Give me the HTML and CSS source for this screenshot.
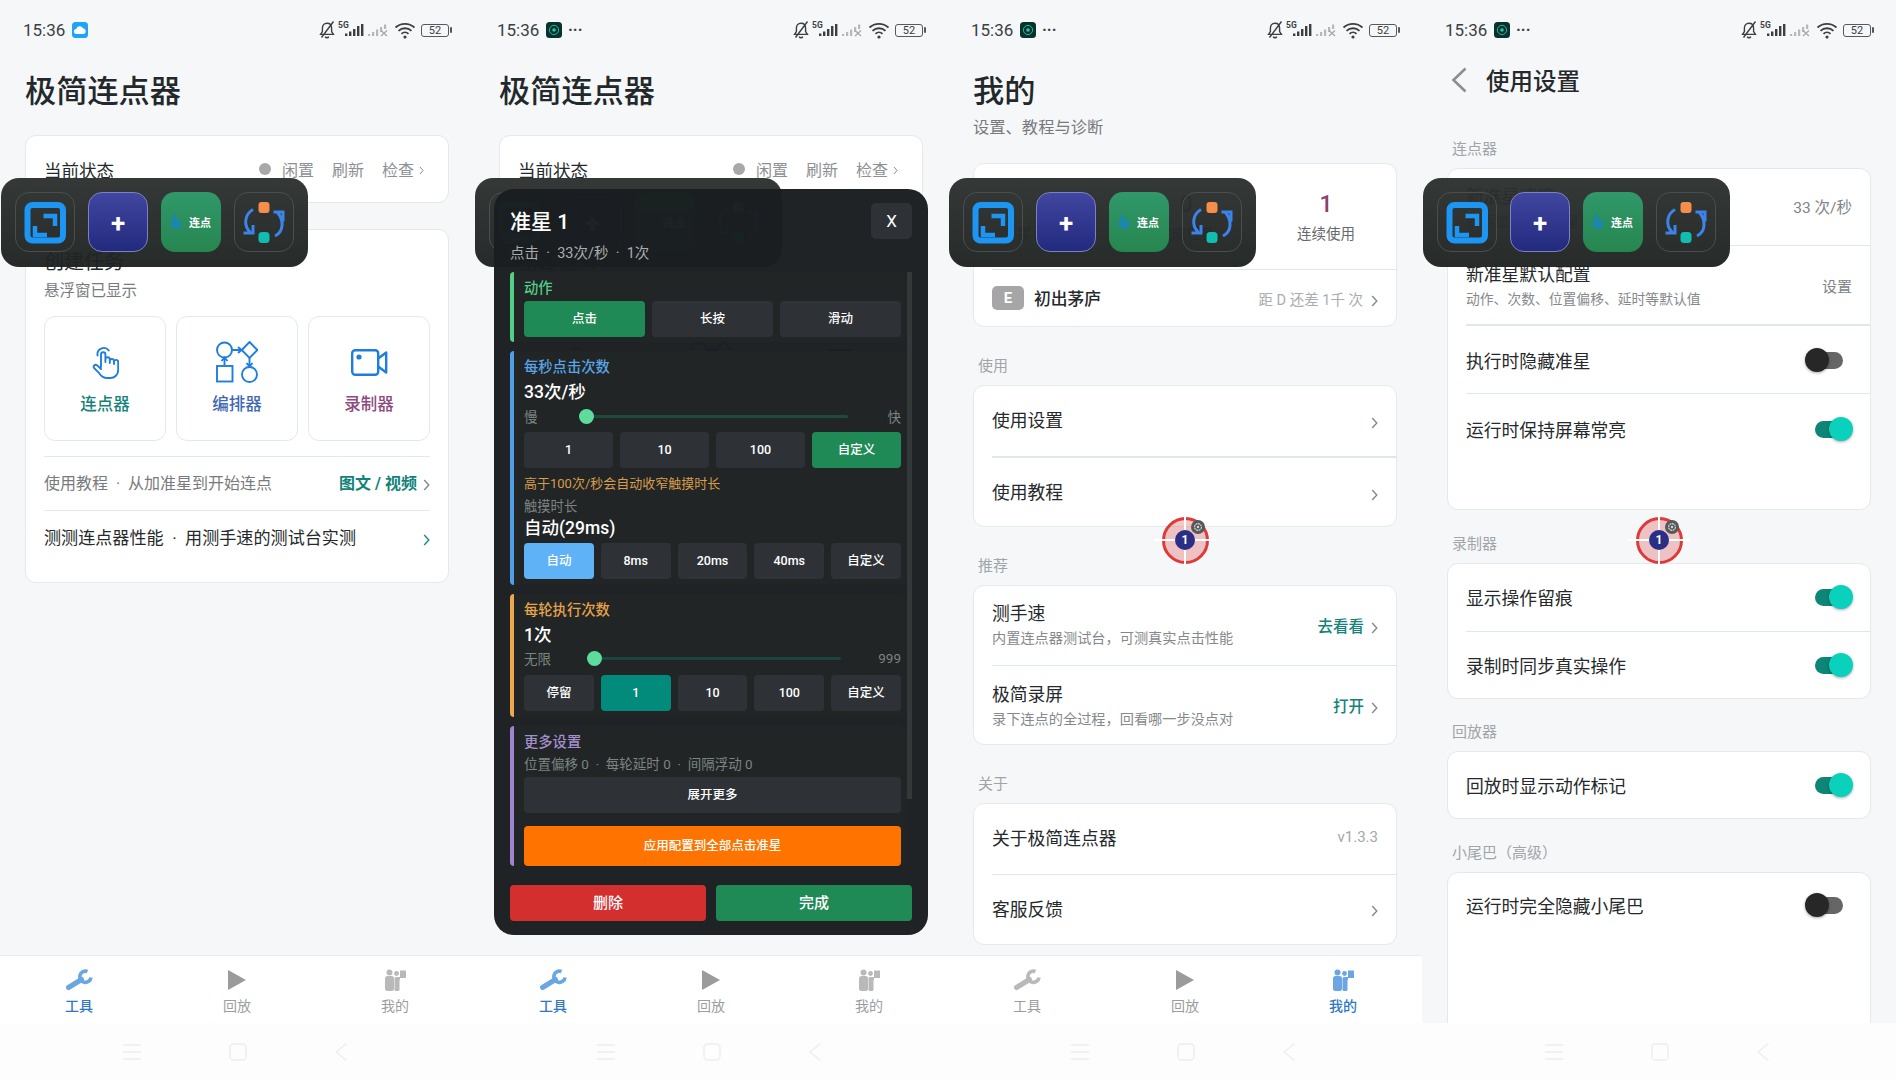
FILE: index.html
```html
<!DOCTYPE html>
<html lang="zh">
<head>
<meta charset="utf-8">
<title>极简连点器</title>
<link rel="stylesheet" href="styles.css">
</head>
<body>
<svg class="defs" width="0" height="0">
  <symbol id="i-chev" viewBox="0 0 7 12"><path d="M1.2 1l4.6 5-4.6 5" fill="none" stroke="currentColor" stroke-width="1.4"/></symbol>
  <symbol id="i-cloud" viewBox="0 0 16 16"><rect width="16" height="16" rx="3.5" fill="#1ea3f6"/><path d="M4.6 12a2.5 2.5 0 0 1-.4-5A3.6 3.6 0 0 1 11 6.3 2.9 2.9 0 0 1 11.6 12z" fill="#fff"/></symbol>
  <symbol id="i-app" viewBox="0 0 16 16"><rect width="16" height="16" rx="3.5" fill="#07332f"/><circle cx="8" cy="8" r="4.6" fill="none" stroke="#2cc3a8" stroke-width=".9"/><circle cx="8" cy="8" r="1.8" fill="#2cc3a8"/></symbol>
  <symbol id="i-status" viewBox="0 0 96 20">
    <path d="M8 3.2c-3 0-4.6 2.2-4.6 5v3.4L1.6 14.4h12.8l-1.8-2.8V8.2c0-2.8-1.6-5-4.6-5zM6.2 16.6a2 2 0 0 0 3.6 0M14.5 1.5L2.5 17.5" fill="none" stroke="#3b3f41" stroke-width="1.4"/>
    <path d="M26 13.5h2.4v2.5H26zM30 11.5h2.4V16H30zM34 9h2.4v7H34zM38 6h2.4v10H38zM42 4h2.4v12H42z" fill="#3b3f41"/>
    <path d="M49 14h2.2v2H49zM53 12h2.2v4H53zM57 9.5h2.2V16H57zM61 7h2.2v5H61zM65 4.5h2.2V9H65z" fill="#b5b9bb"/>
    <path d="M62 10.5l6 5.5M68 10.5l-6 5.5" stroke="#a5a9ab" stroke-width="1.3"/>
    <path d="M76.5 7.5a14 14 0 0 1 19 0M79.5 10.8a9.5 9.5 0 0 1 13 0M82.5 13.8a5 5 0 0 1 7 0" fill="none" stroke="#3b3f41" stroke-width="1.8"/>
    <circle cx="86" cy="17" r="1.6" fill="#3b3f41"/>
  </symbol>
  <symbol id="i-expand" viewBox="0 0 60 60"><rect x="12.5" y="13" width="35.5" height="35.5" rx="5" fill="none" stroke="#1d95f2" stroke-width="6"/><path d="M28.5 24H40v10M20 34v9h12" fill="none" stroke="#1d95f2" stroke-width="4.5"/></symbol>
  <symbol id="i-mini-hand" viewBox="0 0 14 16"><path d="M4.500 1.500a2 2 0 0 1 3.600 0l.4 4 2.500.4c1.800.4 2.500 1.800 2.500 3.800 0 3.400-2.200 5.300-5 5.300-3.200 0-6-2.200-7.800-6.500l2.600-.5L4.500 9z" fill="#1a87ad"/></symbol>
  <symbol id="i-sync" viewBox="0 0 60 60">
    <rect x="24.5" y="10" width="11" height="11" rx="3" fill="#f58d4b"/>
    <rect x="24.5" y="40" width="11" height="11" rx="3.5" fill="#10bdae"/>
    <path d="M19 17.5C11 22 9 33 16 40M9.5 41H19v-8M41 44c8-4 10-15 2-24M39.5 20H49v9.500" fill="none" stroke="#3c84ea" stroke-width="3"/>
  </symbol>
  <symbol id="i-hand" viewBox="0 0 28 33"><g fill="none" stroke="currentColor" stroke-width="1.9" stroke-linecap="round" stroke-linejoin="round"><path d="M10 21V8.500a2.200 2.200 0 0 1 4.400 0V16M14.400 13.500a2.200 2.200 0 0 1 4.400 0V17M18.800 14.500a2.200 2.200 0 0 1 4.200 0V18M23 16a2.100 2.100 0 0 1 4.200 0v8c0 4.600-3.400 8-8 8h-3c-4 0-6-1.800-8-4.800l-5-5c-1.600-2 .8-4.400 3-2.800L10 23"/><path d="M6.600 9.500a6.300 6.300 0 0 1 11.200-5"/></g></symbol>
  <symbol id="i-flow" viewBox="0 0 42 42"><g fill="none" stroke="currentColor" stroke-width="1.900"><circle cx="8.500" cy="9" r="7.500"/><path d="M33.500 1l7.800 8-7.800 8-7.800-8z"/><rect x="1" y="25" width="15.500" height="15.500"/><circle cx="33.500" cy="33.500" r="7.500"/><path d="M16 9h9.500M22 6l3.500 3-3.500 3M33.500 17v8.500M30.500 22l3 3.500 3-3.500M8.500 25v-8.500M5.500 20l3-3.500 3 3.500"/></g></symbol>
  <symbol id="i-cam" viewBox="0 0 37 27"><g fill="none" stroke="currentColor" stroke-width="2.400" stroke-linejoin="round"><rect x="1.200" y="1.200" width="26" height="24.500" rx="3"/><path d="M27.200 9.500l8-6v20l-8-6"/></g><circle cx="8" cy="8" r="2.600" fill="currentColor"/></symbol>
  <symbol id="i-wrench" viewBox="0 0 28 22"><path d="M3.500 18.500l13-8" fill="none" stroke="currentColor" stroke-width="5" stroke-linecap="round"/><path d="M22.500 2.500a5.600 5.600 0 1 0 3.500 6" fill="none" stroke="currentColor" stroke-width="3.600"/></symbol>
  <symbol id="i-play" viewBox="0 0 18 20"><path d="M0 0l18 10L0 20z" fill="currentColor"/></symbol>
  <symbol id="i-user" viewBox="0 0 22 22"><g fill="currentColor"><circle cx="5.500" cy="3.500" r="3"/><rect x="1" y="7" width="9" height="15" rx="2.500"/><circle cx="12.500" cy="4.500" r="2.400"/><rect x="10.500" y="8" width="5" height="14" rx="1.500"/><path d="M14 8h2V1.500h6V9h-6v2h-2z"/></g></symbol>
  <symbol id="i-nav-menu" viewBox="0 0 18 16"><path d="M0 1h18M0 8h18M0 15h18" stroke="currentColor" stroke-width="1.300"/></symbol>
  <symbol id="i-nav-home" viewBox="0 0 18 18"><rect x="1" y="1" width="16" height="16" rx="3.500" fill="none" stroke="currentColor" stroke-width="1.300"/></symbol>
  <symbol id="i-nav-back" viewBox="0 0 12 18"><path d="M11.500 .5L1 9l10.500 8.500" fill="none" stroke="currentColor" stroke-width="1.300"/></symbol>
  <symbol id="i-gear" viewBox="0 0 14 14"><circle cx="7" cy="7" r="7" fill="#55595a"/><circle cx="7" cy="7" r="3.400" fill="none" stroke="#d8d8d8" stroke-width="1.100" stroke-dasharray="2 .6"/><circle cx="7" cy="7" r="1.200" fill="#d8d8d8"/></symbol>
</svg>

<div class="phones">

  <!-- tools page -->
  <section class="phone">
    <div class="status">
      <span class="time">15:36</span>
      <svg class="app-icon"><use href="#i-cloud"/></svg>
      <span class="status-right">
        <svg class="status-icons"><use href="#i-status"/></svg>
        <span class="five-g">5G</span>
        <span class="battery">52</span>
      </span>
    </div>
    <main class="content">
      <h1 class="title">极简连点器</h1>
      <div class="card state-card">
        <span class="state-name">当前状态</span>
        <span class="state-dot"></span>
        <span class="state-link">闲置</span>
        <span class="state-link">刷新</span>
        <span class="state-link">检查</span>
        <svg class="chev chev-small"><use href="#i-chev"/></svg>
      </div>
      <div class="card task-card">
        <div class="task-title">创建任务</div>
        <div class="task-sub">悬浮窗已显示</div>
        <div class="tiles">
          <div class="tile"><svg class="tile-icon hand"><use href="#i-hand"/></svg><span class="tile-name teal">连点器</span></div>
          <div class="tile"><svg class="tile-icon flow"><use href="#i-flow"/></svg><span class="tile-name indigo">编排器</span></div>
          <div class="tile"><svg class="tile-icon cam"><use href="#i-cam"/></svg><span class="tile-name plum">录制器</span></div>
        </div>
        <div class="task-row tutorial">
          <span class="task-note">使用教程 &nbsp;·&nbsp; 从加准星到开始连点</span>
          <span class="link-bold">图文 / 视频</span>
          <svg class="chev"><use href="#i-chev"/></svg>
        </div>
        <div class="task-row perf">
          <span class="task-test">测测连点器性能 &nbsp;·&nbsp; 用测手速的测试台实测</span>
          <svg class="chev chev-teal"><use href="#i-chev"/></svg>
        </div>
      </div>
    </main>
    <nav class="tabs">
      <div class="tab active"><svg class="tab-icon wrench"><use href="#i-wrench"/></svg><span>工具</span></div>
      <div class="tab"><svg class="tab-icon play"><use href="#i-play"/></svg><span>回放</span></div>
      <div class="tab"><svg class="tab-icon user"><use href="#i-user"/></svg><span>我的</span></div>
    </nav>
    <div class="navbar">
      <svg class="nav-menu"><use href="#i-nav-menu"/></svg>
      <svg class="nav-home"><use href="#i-nav-home"/></svg>
      <svg class="nav-back"><use href="#i-nav-back"/></svg>
    </div>
    <div class="float-bar">
      <div class="fb-btn"><svg class="fb-svg"><use href="#i-expand"/></svg></div>
      <div class="fb-btn fb-plus">+</div>
      <div class="fb-btn fb-click"><svg class="fb-hand"><use href="#i-mini-hand"/></svg><span>连点</span></div>
      <div class="fb-btn"><svg class="fb-svg"><use href="#i-sync"/></svg></div>
    </div>
  </section>

  <!-- tools page with the aim dialog open -->
  <section class="phone">
    <div class="status">
      <span class="time">15:36</span>
      <svg class="app-icon"><use href="#i-app"/></svg>
      <span class="dots">···</span>
      <span class="status-right">
        <svg class="status-icons"><use href="#i-status"/></svg>
        <span class="five-g">5G</span>
        <span class="battery">52</span>
      </span>
    </div>
    <main class="content">
      <h1 class="title">极简连点器</h1>
      <div class="card state-card">
        <span class="state-name">当前状态</span>
        <span class="state-dot"></span>
        <span class="state-link">闲置</span>
        <span class="state-link">刷新</span>
        <span class="state-link">检查</span>
        <svg class="chev chev-small"><use href="#i-chev"/></svg>
      </div>
      <div class="card task-card">
        <div class="task-title">创建任务</div>
        <div class="task-sub">悬浮窗已显示</div>
        <div class="tiles">
          <div class="tile"><svg class="tile-icon hand"><use href="#i-hand"/></svg><span class="tile-name teal">连点器</span></div>
          <div class="tile"><svg class="tile-icon flow"><use href="#i-flow"/></svg><span class="tile-name indigo">编排器</span></div>
          <div class="tile"><svg class="tile-icon cam"><use href="#i-cam"/></svg><span class="tile-name plum">录制器</span></div>
        </div>
        <div class="task-row tutorial">
          <span class="task-note">使用教程 &nbsp;·&nbsp; 从加准星到开始连点</span>
          <span class="link-bold">图文 / 视频</span>
          <svg class="chev"><use href="#i-chev"/></svg>
        </div>
        <div class="task-row perf">
          <span class="task-test">测测连点器性能 &nbsp;·&nbsp; 用测手速的测试台实测</span>
          <svg class="chev chev-teal"><use href="#i-chev"/></svg>
        </div>
      </div>
    </main>
    <nav class="tabs">
      <div class="tab active"><svg class="tab-icon wrench"><use href="#i-wrench"/></svg><span>工具</span></div>
      <div class="tab"><svg class="tab-icon play"><use href="#i-play"/></svg><span>回放</span></div>
      <div class="tab"><svg class="tab-icon user"><use href="#i-user"/></svg><span>我的</span></div>
    </nav>
    <div class="navbar">
      <svg class="nav-menu"><use href="#i-nav-menu"/></svg>
      <svg class="nav-home"><use href="#i-nav-home"/></svg>
      <svg class="nav-back"><use href="#i-nav-back"/></svg>
    </div>
    <div class="float-bar">
      <div class="fb-btn"><svg class="fb-svg"><use href="#i-expand"/></svg></div>
      <div class="fb-btn fb-plus">+</div>
      <div class="fb-btn fb-click"><svg class="fb-hand"><use href="#i-mini-hand"/></svg><span>连点</span></div>
      <div class="fb-btn"><svg class="fb-svg"><use href="#i-sync"/></svg></div>
    </div>

    <div class="dialog">
      <div class="dlg-head">
        <div>
          <div class="dlg-title">准星 1</div>
          <div class="dlg-sub">点击 &nbsp;·&nbsp; 33次/秒 &nbsp;·&nbsp; 1次</div>
        </div>
        <div class="dlg-close">X</div>
      </div>
      <div class="dlg-list">
        <div class="scrollbar"></div>
        <div class="group group-green">
          <div class="group-head">动作</div>
          <div class="btn-row">
            <div class="btn on-green">点击</div>
            <div class="btn">长按</div>
            <div class="btn">滑动</div>
          </div>
        </div>
        <div class="group group-blue">
          <div class="group-head">每秒点击次数</div>
          <div class="value">33次/秒</div>
          <div class="slider">
            <span class="s-min">慢</span>
            <span class="s-track"></span>
            <span class="s-max">快</span>
          </div>
          <div class="btn-row row-after-slider">
            <div class="btn">1</div>
            <div class="btn">10</div>
            <div class="btn">100</div>
            <div class="btn on-green">自定义</div>
          </div>
          <div class="warn">高于100次/秒会自动收窄触摸时长</div>
          <div class="hint">触摸时长</div>
          <div class="value value-tight">自动(29ms)</div>
          <div class="btn-row row-tight">
            <div class="btn on-blue">自动</div>
            <div class="btn">8ms</div>
            <div class="btn">20ms</div>
            <div class="btn">40ms</div>
            <div class="btn">自定义</div>
          </div>
        </div>
        <div class="group group-orange">
          <div class="group-head">每轮执行次数</div>
          <div class="value">1次</div>
          <div class="slider slider-count">
            <span class="s-min">无限</span>
            <span class="s-track"></span>
            <span class="s-max">999</span>
          </div>
          <div class="btn-row row-after-count">
            <div class="btn">停留</div>
            <div class="btn on-teal">1</div>
            <div class="btn">10</div>
            <div class="btn">100</div>
            <div class="btn">自定义</div>
          </div>
        </div>
        <div class="group group-purple">
          <div class="group-head">更多设置</div>
          <div class="hint hint-more">位置偏移 0 &nbsp;·&nbsp; 每轮延时 0 &nbsp;·&nbsp; 间隔浮动 0</div>
          <div class="btn btn-wide">展开更多</div>
          <div class="btn btn-apply">应用配置到全部点击准星</div>
        </div>
      </div>
      <div class="dlg-foot">
        <div class="foot-btn foot-del">删除</div>
        <div class="foot-btn foot-done">完成</div>
      </div>
    </div>
  </section>

  <!-- my page -->
  <section class="phone">
    <div class="status">
      <span class="time">15:36</span>
      <svg class="app-icon"><use href="#i-app"/></svg>
      <span class="dots">···</span>
      <span class="status-right">
        <svg class="status-icons"><use href="#i-status"/></svg>
        <span class="five-g">5G</span>
        <span class="battery">52</span>
      </span>
    </div>
    <main class="content">
      <h1 class="title title-sub">我的</h1>
      <div class="page-sub">设置、教程与诊断</div>
      <div class="card">
        <div class="stats">
          <div class="stat"><b>0</b><span>累计使用</span></div>
          <div class="stat"><b>0</b><span>完成任务</span></div>
          <div class="stat"><b class="stat-hot">1</b><span>连续使用</span></div>
        </div>
        <div class="level">
          <span class="badge">E</span>
          <span class="level-name">初出茅庐</span>
          <span class="level-next">距 D 还差 1千 次</span>
          <svg class="chev"><use href="#i-chev"/></svg>
        </div>
      </div>
      <div class="label">使用</div>
      <div class="card">
        <div class="row row-70"><span>使用设置</span><svg class="chev"><use href="#i-chev"/></svg></div>
        <div class="row row-70 thick"><span>使用教程</span><svg class="chev"><use href="#i-chev"/></svg></div>
      </div>
      <div class="label">推荐</div>
      <div class="card">
        <div class="row row-two">
          <div class="two"><span>测手速</span><small>内置连点器测试台，可测真实点击性能</small></div>
          <span class="go">去看看</span><svg class="chev"><use href="#i-chev"/></svg>
        </div>
        <div class="row row-two">
          <div class="two"><span>极简录屏</span><small>录下连点的全过程，回看哪一步没点对</small></div>
          <span class="go">打开</span><svg class="chev"><use href="#i-chev"/></svg>
        </div>
      </div>
      <div class="label">关于</div>
      <div class="card">
        <div class="row row-70"><span>关于极简连点器</span><em class="aside">v1.3.3</em></div>
        <div class="row row-70"><span>客服反馈</span><svg class="chev"><use href="#i-chev"/></svg></div>
      </div>
    </main>
    <nav class="tabs">
      <div class="tab"><svg class="tab-icon wrench"><use href="#i-wrench"/></svg><span>工具</span></div>
      <div class="tab"><svg class="tab-icon play"><use href="#i-play"/></svg><span>回放</span></div>
      <div class="tab active"><svg class="tab-icon user"><use href="#i-user"/></svg><span>我的</span></div>
    </nav>
    <div class="navbar">
      <svg class="nav-menu"><use href="#i-nav-menu"/></svg>
      <svg class="nav-home"><use href="#i-nav-home"/></svg>
      <svg class="nav-back"><use href="#i-nav-back"/></svg>
    </div>
    <div class="float-bar">
      <div class="fb-btn"><svg class="fb-svg"><use href="#i-expand"/></svg></div>
      <div class="fb-btn fb-plus">+</div>
      <div class="fb-btn fb-click"><svg class="fb-hand"><use href="#i-mini-hand"/></svg><span>连点</span></div>
      <div class="fb-btn"><svg class="fb-svg"><use href="#i-sync"/></svg></div>
    </div>
    <div class="marker"><i class="marker-ring"></i><b class="marker-num">1</b><svg class="marker-gear"><use href="#i-gear"/></svg></div>
  </section>

  <!-- settings page -->
  <section class="phone">
    <div class="status">
      <span class="time">15:36</span>
      <svg class="app-icon"><use href="#i-app"/></svg>
      <span class="dots">···</span>
      <span class="status-right">
        <svg class="status-icons"><use href="#i-status"/></svg>
        <span class="five-g">5G</span>
        <span class="battery">52</span>
      </span>
    </div>
    <main class="content">
      <div class="back-head">
        <svg class="back" viewBox="0 0 16 26"><path d="M14.500 1.500L2.500 13l12 11.500" fill="none" stroke="#8b8f92" stroke-width="2.600"/></svg>
        <span>使用设置</span>
      </div>
      <div class="label label-first">连点器</div>
      <div class="card card-settings">
        <div class="row row-speed">
          <div class="two"><span>新准星速度</span><small>新添加的点击准星速度</small></div>
          <em class="aside aside-dark">33 次/秒</em>
        </div>
        <div class="row row-default">
          <div class="two"><span>新准星默认配置</span><small>动作、次数、位置偏移、延时等默认值</small></div>
          <em class="aside aside-dark">设置</em>
        </div>
        <div class="row row-69 thick"><span>执行时隐藏准星</span><i class="switch"></i></div>
        <div class="row row-72"><span>运行时保持屏幕常亮</span><i class="switch on"></i></div>
      </div>
      <div class="label label-rec">录制器</div>
      <div class="card">
        <div class="row row-67"><span>显示操作留痕</span><i class="switch on"></i></div>
        <div class="row row-67"><span>录制时同步真实操作</span><i class="switch on"></i></div>
      </div>
      <div class="label label-rec">回放器</div>
      <div class="card">
        <div class="row row-66"><span>回放时显示动作标记</span><i class="switch on"></i></div>
      </div>
      <div class="label label-rec">小尾巴（高级）</div>
      <div class="card card-tall">
        <div class="row row-67"><span>运行时完全隐藏小尾巴</span><i class="switch"></i></div>
      </div>
    </main>
    <div class="navbar">
      <svg class="nav-menu"><use href="#i-nav-menu"/></svg>
      <svg class="nav-home"><use href="#i-nav-home"/></svg>
      <svg class="nav-back"><use href="#i-nav-back"/></svg>
    </div>
    <div class="float-bar">
      <div class="fb-btn"><svg class="fb-svg"><use href="#i-expand"/></svg></div>
      <div class="fb-btn fb-plus">+</div>
      <div class="fb-btn fb-click"><svg class="fb-hand"><use href="#i-mini-hand"/></svg><span>连点</span></div>
      <div class="fb-btn"><svg class="fb-svg"><use href="#i-sync"/></svg></div>
    </div>
    <div class="marker"><i class="marker-ring"></i><b class="marker-num">1</b><svg class="marker-gear"><use href="#i-gear"/></svg></div>
  </section>

</div>
</body>
</html>
```

FILE: styles.css
```css
* {
  box-sizing: border-box;
}
body {
  margin: 0;
  background: #f5f7f9;
  color: #25292b;
  font-family: Roboto, "Noto Sans CJK SC", sans-serif;
  overflow: hidden;
}
.defs {
  position: absolute;
}
.phones {
  display: flex;
  width: 1896px;
  height: 1080px;
}
.phone {
  position: relative;
  display: flex;
  flex-direction: column;
  width: 474px;
  height: 1080px;
  overflow: hidden;
}

/* status bar */
.status {
  display: flex;
  align-items: center;
  flex: none;
  height: 60px;
  padding-left: 23px;
  color: #3b3f41;
}
.time {
  font-size: 17px;
  width: 49px;
}
.app-icon {
  width: 16px;
  height: 16px;
}
.dots {
  margin-left: 6px;
  font-size: 16px;
  font-weight: 700;
  line-height: 16px;
}
.status-right {
  position: relative;
  display: flex;
  align-items: center;
  margin-left: auto;
  margin-right: 25px;
}
.status-icons {
  width: 96px;
  height: 20px;
  margin-right: 6px;
}
.five-g {
  position: absolute;
  left: 19px;
  top: 0;
  font-size: 8.500px;
  font-weight: 700;
  line-height: 10px;
  color: #3b3f41;
}
.battery {
  position: relative;
  width: 28px;
  height: 13px;
  border: 1px solid #55595b;
  border-radius: 3px;
  font-size: 11px;
  line-height: 11px;
  text-align: center;
}
.battery::after {
  content: "";
  position: absolute;
  right: -4px;
  top: 2.5px;
  width: 2px;
  height: 6px;
  border-radius: 1px;
  background: #55595b;
}

/* page content */
.content {
  flex: 1;
  min-height: 0;
  padding: 0 25px;
  overflow: hidden;
}
.title {
  margin: 12px 0 23px;
  font-size: 31.200px;
  font-weight: 500;
  line-height: 40px;
  color: #23282a;
}
.title-sub {
  margin-bottom: 5px;
}
.page-sub {
  margin-bottom: 24px;
  font-size: 16.300px;
  line-height: 22px;
  color: #777b7e;
}
.card {
  background: #fff;
  border: 1px solid #e4e9ec;
  border-radius: 11px;
}
.chev {
  flex: none;
  width: 7px;
  height: 12px;
  margin-top: 6px;
  color: #85898c;
}
.chev-small {
  width: 5px;
  height: 9px;
  margin: 3px 0 0 5px;
}
.chev-teal {
  color: #1a8a7e;
}

/* state + task cards */
.state-card {
  display: flex;
  align-items: center;
  height: 68px;
  margin-bottom: 26px;
  padding: 0 24px 0 18px;
}
.state-name {
  margin-right: auto;
  font-size: 17.500px;
}
.state-dot {
  width: 12px;
  height: 12px;
  border-radius: 50%;
  background: #a8a8a8;
  margin-right: 11px;
}
.state-link {
  margin-left: 18px;
  font-size: 16px;
  color: #8d9194;
}
.state-dot + .state-link {
  margin-left: 0;
}
.task-card {
  height: 354px;
  padding: 18px 18px 0;
}
.task-title {
  font-size: 20px;
  line-height: 28px;
}
.task-sub {
  margin-top: 5px;
  font-size: 15.500px;
  line-height: 20px;
  color: #777b7e;
}
.tiles {
  display: grid;
  grid-template-columns: repeat(3, 1fr);
  gap: 10px;
  margin-top: 15px;
}
.tile {
  display: flex;
  flex-direction: column;
  align-items: center;
  height: 125px;
  border: 1px solid #e4e9ec;
  border-radius: 11px;
  color: #1f7de0;
}
.hand {
  width: 28px;
  height: 33px;
  margin: 29px 0 14px;
}
.flow {
  width: 42px;
  height: 42px;
  margin: 24px 0 10px;
}
.cam {
  width: 37px;
  height: 27px;
  margin: 32px 0 17px;
}
.tile-name {
  font-size: 16.500px;
  font-weight: 500;
  line-height: 24px;
}
.teal {
  color: #13837a;
}
.indigo {
  color: #3f68b3;
}
.plum {
  color: #8d4a82;
}
.task-row {
  display: flex;
  align-items: center;
  border-top: 1px solid #e4e9ec;
}
.tutorial {
  height: 54px;
  margin-top: 15px;
  padding-bottom: 3px;
}
.perf {
  height: 58px;
  padding-bottom: 6px;
}
.task-note {
  margin-right: auto;
  font-size: 16px;
  color: #777b7e;
}
.link-bold {
  margin-right: 6px;
  font-size: 16px;
  font-weight: 700;
  color: #13837a;
}
.task-test {
  margin-right: auto;
  font-size: 17.100px;
}

/* tabs and system nav */
.tabs {
  display: grid;
  grid-template-columns: repeat(3, 1fr);
  flex: none;
  height: 68px;
  background: #fff;
  border-top: 1px solid #e9ecee;
}
.tab {
  display: flex;
  flex-direction: column;
  align-items: center;
  padding-top: 13px;
  font-size: 14px;
  line-height: 20px;
  color: #9a9ea0;
}
.tab-icon {
  display: block;
  height: 22px;
  margin-bottom: 5px;
  color: #b9b9b9;
}
.tab.active {
  font-weight: 500;
  color: #2f78c6;
}
.tab.active .tab-icon {
  color: #6ba5e2;
}
.wrench {
  width: 28px;
}
.play {
  width: 18px;
  color: #9b9b9b;
}
.user {
  width: 22px;
}
.navbar {
  display: flex;
  align-items: center;
  justify-content: center;
  gap: 88px;
  flex: none;
  height: 57px;
  padding-right: 4px;
  background: #fdfdfd;
  color: #eceded;
}
.nav-menu {
  width: 18px;
  height: 16px;
}
.nav-home {
  width: 18px;
  height: 18px;
}
.nav-back {
  width: 12px;
  height: 18px;
}

/* floating toolbar */
.float-bar {
  position: absolute;
  left: 1px;
  top: 178px;
  z-index: 5;
  display: flex;
  gap: 13px;
  width: 307px;
  height: 89px;
  padding: 14px;
  border-radius: 18px;
  background: linear-gradient(rgba(44, 49, 47, .96), rgba(30, 34, 33, .96));
}
.fb-btn {
  display: flex;
  align-items: center;
  justify-content: center;
  width: 60px;
  height: 60px;
  border: 1px solid #4b4e4d;
  border-radius: 14px;
}
.fb-svg {
  width: 60px;
  height: 60px;
  flex: none;
}
.fb-plus {
  padding-top: 2px;
  border: 1.500px solid #7d80c6;
  background: linear-gradient(#41469f, #222a7e);
  color: #fff;
  font-size: 26px;
  font-weight: 700;
}
.fb-click {
  justify-content: flex-start;
  gap: 7px;
  padding-left: 7px;
  border: 0;
  background: linear-gradient(#31986a, #26864f);
  color: #fff;
  font-size: 11px;
  font-weight: 700;
}
.fb-hand {
  width: 14px;
  height: 16px;
}

/* aim dialog */
.dialog {
  position: absolute;
  left: 20px;
  top: 189px;
  z-index: 6;
  width: 434px;
  height: 746px;
  padding: 18px 16px 14px;
  border-radius: 20px;
  background: rgba(26, 30, 32, .975);
  color: #fff;
}
.dlg-head {
  display: flex;
  justify-content: space-between;
}
.dlg-title {
  font-size: 21px;
  font-weight: 500;
  line-height: 30px;
}
.dlg-sub {
  margin-top: 7px;
  font-size: 14.500px;
  line-height: 20px;
  color: #a9adaf;
}
.dlg-close {
  width: 41px;
  height: 36px;
  margin-top: -4px;
  border-radius: 5px;
  background: #2e3236;
  font-size: 17px;
  line-height: 36px;
  text-align: center;
}
.dlg-list {
  position: relative;
  margin-top: 8px;
  padding-right: 5px;
}
.scrollbar {
  position: absolute;
  right: 0;
  top: 0;
  width: 5px;
  height: 527px;
  background: #333938;
}
.group {
  margin-bottom: 9px;
  padding: 6px 6px 6px 10px;
  border-left: 4px solid;
  border-radius: 4px 8px 8px 4px;
  background: #212526;
}
.group-green {
  border-color: #52cf87;
  padding-bottom: 5px;
}
.group-blue {
  border-color: #4f9fe8;
}
.group-orange {
  border-color: #eda84a;
}
.group-purple {
  border-color: #a084d0;
  margin-bottom: 0;
  padding-bottom: 0;
}
.group-head {
  font-size: 14.300px;
  font-weight: 500;
  line-height: 20px;
  margin-bottom: 3px;
}
.group-green .group-head {
  color: #52cf87;
}
.group-blue .group-head {
  color: #5aa4e6;
}
.group-orange .group-head {
  color: #e4a24b;
}
.group-purple .group-head {
  color: #a48fce;
}
.value {
  margin-top: -1px;
  font-size: 17.500px;
  font-weight: 500;
  line-height: 26px;
}
.value-tight {
  margin-top: 0;
  line-height: 24px;
}
.slider {
  display: flex;
  align-items: center;
  margin-top: 2px;
  height: 18px;
  font-size: 13.500px;
  color: #7b8481;
}
.s-min {
  width: 55px;
}
.s-max {
  width: 53px;
  text-align: right;
}
.s-track {
  position: relative;
  flex: 1;
  height: 3px;
  border-radius: 2px;
  background: #1f4a37;
}
.s-track::before {
  content: "";
  position: absolute;
  left: 0;
  top: -6px;
  width: 15px;
  height: 15px;
  border-radius: 50%;
  background: #5edc9b;
}
.slider-count {
  margin-top: 1px;
}
.slider-count .s-min {
  width: 62.500px;
}
.slider-count .s-max {
  width: 60px;
}
.slider-count .s-track {
  background: #1a4540;
}
.btn-row {
  display: flex;
  gap: 7px;
}
.row-after-slider {
  margin-top: 7px;
}
.row-after-count {
  margin-top: 8px;
}
.row-tight {
  margin-top: 3px;
}
.btn {
  flex: 1;
  height: 36px;
  border-radius: 4px;
  background: #2e3236;
  font-size: 12.500px;
  font-weight: 500;
  line-height: 36px;
  text-align: center;
}
.on-green {
  background: #1f8a55;
}
.on-blue {
  background: #5fb2f6;
}
.on-teal {
  background: #028a7b;
}
.warn {
  margin-top: 6px;
  font-size: 13px;
  line-height: 20px;
  color: #d89c4c;
}
.hint {
  margin-top: 4px;
  font-size: 13.300px;
  line-height: 18px;
  color: #7b8481;
}
.hint-more {
  margin-top: 1px;
  font-size: 13.500px;
}
.btn-wide {
  margin-top: 4px;
}
.btn-apply {
  height: 40px;
  margin-top: 13px;
  background: #ff7300;
  line-height: 40px;
}
.dlg-foot {
  display: flex;
  gap: 10px;
  margin-top: 19px;
}
.foot-btn {
  flex: 1;
  height: 36px;
  border-radius: 4px;
  font-size: 15px;
  font-weight: 500;
  line-height: 36px;
  text-align: center;
}
.foot-del {
  background: #d32f2f;
}
.foot-done {
  background: #1f8a55;
}

/* my page */
.stats {
  display: grid;
  grid-template-columns: repeat(3, 1fr);
  height: 105px;
  padding-left: 2px;
}
.stat {
  display: flex;
  flex-direction: column;
  align-items: center;
  padding-top: 26px;
  font-size: 14.500px;
  line-height: 20px;
  color: #666a6d;
}
.stat b {
  font-size: 23px;
  line-height: 30px;
  margin-bottom: 5px;
  font-weight: 500;
}
.stat-hot {
  color: #8b3f6f;
}
.level {
  display: flex;
  align-items: center;
  height: 57px;
  margin-left: 18px;
  padding-right: 18px;
  border-top: 1px solid #e1e6e9;
}
.badge {
  width: 32px;
  height: 24px;
  border-radius: 5px;
  background: #a6a6a6;
  color: #fff;
  font-size: 15px;
  font-weight: 700;
  line-height: 24px;
  text-align: center;
}
.level-name {
  margin-left: 10px;
  margin-right: auto;
  font-size: 16.800px;
  font-weight: 500;
}
.level-next {
  margin-right: 8px;
  font-size: 14.500px;
  color: #a9adaf;
}
.label {
  margin: 29px 0 9px 5px;
  font-size: 15px;
  line-height: 20px;
  color: #a0a5a8;
}
.row {
  display: flex;
  align-items: center;
  margin-left: 18px;
  padding-right: 18px;
  font-size: 17.800px;
  border-top: 1px solid #e1e6e9;
}
.row:first-child {
  border-top: 0;
}
.row > span:first-child,
.two {
  margin-right: auto;
}
.thick {
  border-top-width: 2px;
}
.row-70 {
  height: 70px;
  padding-bottom: 4px;
}
.row-70 .chev {
  margin-top: 7px;
}
.row-70.thick {
  padding-bottom: 2px;
}
.row-two {
  height: 79px;
  padding-bottom: 2px;
}
.row-two + .row-two {
  padding-bottom: 0;
}
.two span {
  display: block;
  font-size: 17.800px;
  line-height: 26px;
}
.two small {
  display: block;
  margin-top: 1px;
  font-size: 14.200px;
  line-height: 20px;
  color: #85898c;
}
.go {
  margin-right: 7px;
  font-size: 15.500px;
  font-weight: 500;
  color: #13837a;
}
.aside {
  font-style: normal;
  font-size: 15px;
  color: #a3a7aa;
}
.aside-dark {
  color: #808487;
}

/* settings page */
.back-head {
  display: flex;
  align-items: center;
  height: 40px;
  padding-left: 4px;
  font-size: 23.500px;
  font-weight: 500;
}
.back {
  width: 16px;
  height: 26px;
  margin-right: 19px;
}
.label-first {
  margin-top: 39px;
}
.label-rec {
  margin-top: 23.500px;
}
.card-settings {
  height: 342px;
}
.row-speed {
  height: 76px;
}
.row-speed .aside {
  margin-top: -2px;
  font-size: 15.500px;
}
.row-default {
  height: 79px;
}
.row-default small {
  font-size: 13.800px;
}
.row-69 {
  height: 69px;
}
.row-72 {
  height: 72px;
  padding-bottom: 2px;
}
.row-67 {
  height: 67px;
}
.row-66 {
  height: 66px;
}
.card-tall {
  height: 300px;
}
.card-tall .row {
  padding-bottom: 3px;
}

/* toggles */
.switch {
  position: relative;
  flex: none;
  width: 48px;
  height: 24px;
  margin-right: -1px;
}
.switch::before {
  content: "";
  position: absolute;
  left: 3px;
  top: 4px;
  width: 35px;
  height: 17px;
  border-radius: 9px;
  background: #666;
}
.switch::after {
  content: "";
  position: absolute;
  left: 0;
  top: 0;
  width: 24px;
  height: 24px;
  border-radius: 50%;
  background: #272727;
  box-shadow: 0 1px 3px rgba(0, 0, 0, .35);
}
.switch.on::before {
  left: 10px;
  background: #0d8577;
}
.switch.on::after {
  left: 24px;
  background: #0ad1bb;
}

/* aim marker */
.marker {
  position: absolute;
  left: 206px;
  top: 509px;
  z-index: 4;
  width: 62px;
  height: 62px;
}
.marker::before,
.marker::after {
  content: "";
  position: absolute;
  z-index: 1;
  background: #fff;
}
.marker::before {
  left: 0;
  top: 30px;
  width: 62px;
  height: 2px;
}
.marker::after {
  left: 30px;
  top: 3px;
  width: 2px;
  height: 56px;
}
.marker-ring {
  position: absolute;
  left: 7.500px;
  top: 7.500px;
  width: 47px;
  height: 47px;
  border: 3px solid #dd3a3a;
  border-radius: 50%;
  background: rgba(222, 70, 70, .3);
}
.marker-num {
  position: absolute;
  z-index: 2;
  left: 21px;
  top: 21px;
  width: 20px;
  height: 20px;
  border-radius: 50%;
  background: #2a2e86;
  color: #fff;
  font-size: 12px;
  line-height: 20px;
  text-align: center;
}
.marker-gear {
  position: absolute;
  z-index: 3;
  left: 37px;
  top: 11px;
  width: 14px;
  height: 14px;
}
```
